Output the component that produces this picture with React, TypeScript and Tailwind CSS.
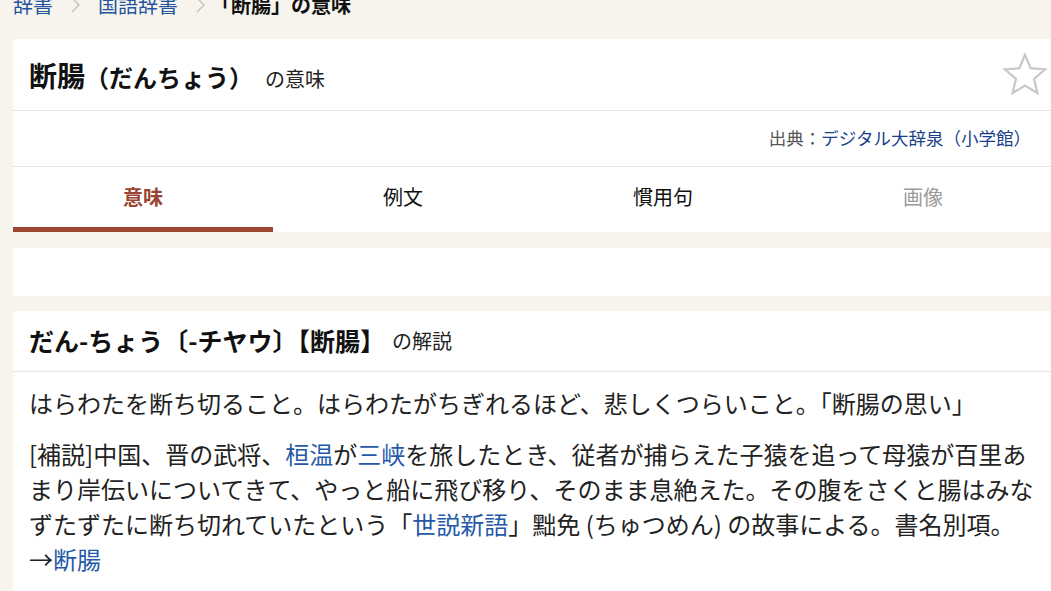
const jp = "font-['Noto_Sans_CJK_JP','Noto_Sans',sans-serif]";

function Chevron({ tight }: { tight?: boolean }) {
  return (
    <svg
      width="9"
      height="16"
      viewBox="0 0 9 16"
      className={tight ? "ml-[18px] mr-[6px] shrink-0" : "mx-[18px] shrink-0"}
    >
      <path d="M1 1 L8 8 L1 15" fill="none" stroke="#bdbdbd" strokeWidth="1.2" />
    </svg>
  );
}

function StarIcon() {
  return (
    <svg width="46" height="46" viewBox="0 0 48 48">
      <polygon
        points="24,3 29.9,16.9 44.9,18.2 33.5,28.1 36.9,42.8 24,35 11.1,42.8 14.5,28.1 3.1,18.2 18.1,16.9"
        fill="none"
        stroke="#c9c9c9"
        strokeWidth="2.4"
        strokeLinejoin="miter"
      />
    </svg>
  );
}

const tabs = [
  { label: "意味", state: "active" },
  { label: "例文", state: "normal" },
  { label: "慣用句", state: "normal" },
  { label: "画像", state: "disabled" },
];

export default function App() {
  return (
    <div className={`${jp} h-[591px] w-full overflow-hidden bg-[#f7f4ee] text-[#222]`}>
      {/* breadcrumb */}
      <div className="-mt-[10px] mb-[19px] flex h-[30px] items-center pl-[13px] text-[20px] leading-[30px]">
        <span className="text-[#24549e]">辞書</span>
        <Chevron />
        <span className="text-[#24549e]">国語辞書</span>
        <Chevron tight />
        <span className="font-bold text-[#111]">「断腸」の意味</span>
      </div>

      {/* main card */}
      <div className="ml-[13px] w-[1040px] bg-white">
        <div className="flex h-[72px] items-center justify-between border-b border-[#e6e6e6] pl-[16px] pr-[5px]">
          <div className="flex items-baseline">
            <h1 className="font-bold text-[#111]">
              <span className="text-[28px]">断腸</span>
              <span className="text-[24px]">（だんちょう）</span>
            </h1>
            <span className="ml-[12px] text-[20px] text-[#222]">の意味</span>
          </div>
          <StarIcon />
        </div>

        <div className="flex h-[56px] items-center justify-end border-b border-[#e6e6e6] pr-[22px] text-[17.5px]">
          <span className="text-[#555]">出典：</span>
          <span className="text-[#1b3f8b]">デジタル大辞泉（小学館）</span>
        </div>

        <div className="grid h-[65px] grid-cols-4">
          {tabs.map((t) => (
            <div
              key={t.label}
              className={
                t.state === "active"
                  ? "flex items-center justify-center border-b-[5px] border-[#9a4632] text-[20px] font-bold text-[#9a4632]"
                  : t.state === "disabled"
                    ? "flex items-center justify-center border-b-[5px] border-transparent text-[20px] text-[#9b9b9b]"
                    : "flex items-center justify-center border-b-[5px] border-transparent text-[20px] text-[#111]"
              }
            >
              {t.label}
            </div>
          ))}
        </div>
      </div>

      <div className="ml-[13px] mt-[16px] h-[48px] w-[1040px] bg-white" />

      {/* definition card */}
      <div className="ml-[13px] mt-[15px] w-[1040px] bg-white pb-[60px]">
        <div className="flex h-[61px] items-center border-b border-[#e6e6e6] px-[16px]">
          <h2 className="text-[25px] font-bold text-[#111]">だん-ちょう〔-チヤウ〕【断腸】</h2>
          <span className="ml-[7px] text-[20px] text-[#222]">の解説</span>
        </div>
        <div className="pl-[16px] pr-[10px] pt-[13px] text-[24px] leading-[35px] text-[#222]">
          <p>はらわたを断ち切ること。はらわたがちぎれるほど、悲しくつらいこと。「断腸の思い」</p>
          <p className="mt-[16px]">
            [補説]中国、晋の武将、<span className="text-[#2559a8]">桓温</span>が
            <span className="text-[#2559a8]">三峡</span>
            を旅したとき、従者が捕らえた子猿を追って母猿が百里あまり岸伝いについてきて、やっと船に飛び移り、そのまま息絶えた。その腹をさくと腸はみなずたずたに断ち切れていたという「
            <span className="text-[#2559a8]">世説新語</span>」黜免 (ちゅつめん) の故事による。書名別項。
            <br />→<span className="text-[#2559a8]">断腸</span>
          </p>
        </div>
      </div>
    </div>
  );
}
